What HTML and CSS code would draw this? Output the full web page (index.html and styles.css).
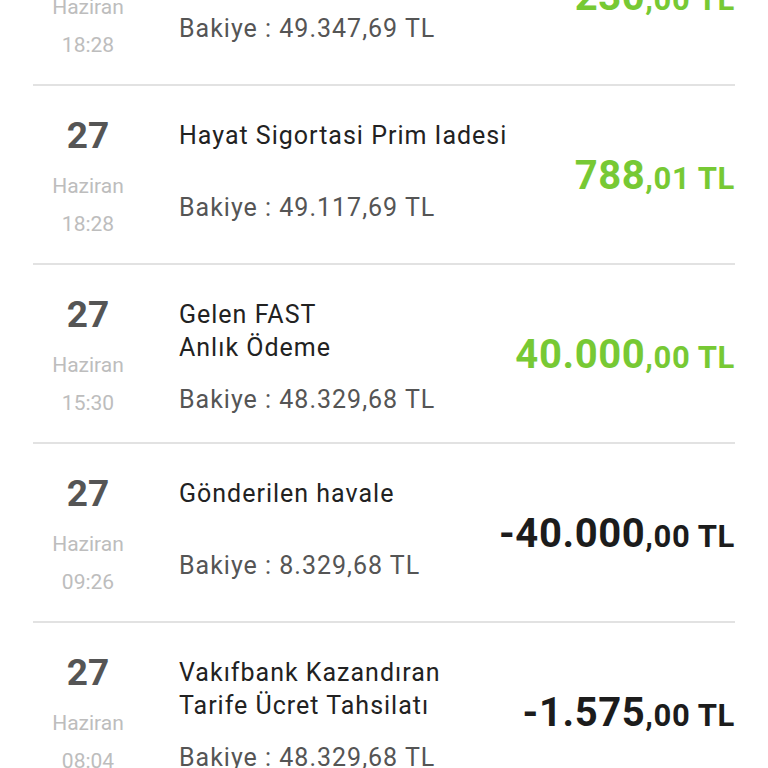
FILE: index.html
```html
<!DOCTYPE html>
<html lang="tr">
<head>
  <meta charset="UTF-8" />
  <meta name="viewport" content="width=device-width, initial-scale=1.0" />
  <title>Hesap Hareketleri</title>
  <link rel="stylesheet" href="styles.css">
</head>
<body>
  <!-- list is scrolled, first row partly hidden -->
  <div class="tx-list">

    <div class="tx">
      <div class="tx-date"><span class="day">27</span><span class="month">Haziran</span><span class="time">18:28</span></div>
      <div class="tx-info"><div class="title">Gelen havale</div><div class="balance">Bakiye : 49.347,69 TL</div></div>
      <div class="tx-amount plus"><span class="int">230</span><span class="dec">,00 TL</span></div>
    </div>

    <div class="tx">
      <div class="tx-date"><span class="day">27</span><span class="month">Haziran</span><span class="time">18:28</span></div>
      <div class="tx-info"><div class="title">Hayat Sigortasi Prim Iadesi</div><div class="balance">Bakiye : 49.117,69 TL</div></div>
      <div class="tx-amount plus"><span class="int">788</span><span class="dec">,01 TL</span></div>
    </div>

    <div class="tx">
      <div class="tx-date"><span class="day">27</span><span class="month">Haziran</span><span class="time">15:30</span></div>
      <div class="tx-info"><div class="title">Gelen FAST<br>Anlık Ödeme</div><div class="balance">Bakiye : 48.329,68 TL</div></div>
      <div class="tx-amount plus"><span class="int">40.000</span><span class="dec">,00 TL</span></div>
    </div>

    <div class="tx">
      <div class="tx-date"><span class="day">27</span><span class="month">Haziran</span><span class="time">09:26</span></div>
      <div class="tx-info"><div class="title">Gönderilen havale</div><div class="balance">Bakiye : 8.329,68 TL</div></div>
      <div class="tx-amount"><span class="int">-40.000</span><span class="dec">,00 TL</span></div>
    </div>

    <div class="tx">
      <div class="tx-date"><span class="day">27</span><span class="month">Haziran</span><span class="time">08:04</span></div>
      <div class="tx-info"><div class="title">Vakıfbank Kazandıran<br>Tarife Ücret Tahsilatı</div><div class="balance">Bakiye : 48.329,68 TL</div></div>
      <div class="tx-amount"><span class="int">-1.575</span><span class="dec">,00 TL</span></div>
    </div>

  </div>
</body>
</html>
```

FILE: styles.css
```css
body { margin: 0; background: #fff; font-family: Roboto, "Noto Sans", sans-serif; overflow: hidden; }
.tx-list { margin-top: -93px; padding: 0 33px; }
.tx { display: flex; height: 177px; border-bottom: 2px solid #e2e2e2; }
.tx-date { width: 110px; flex-shrink: 0; display: flex; flex-direction: column; align-items: center; padding-top: 28px; }
.tx-date .day { font-size: 37px; font-weight: 700; color: #555; line-height: 44px; margin-bottom: 9px; }
.tx-date .month, .tx-date .time { font-size: 21px; color: #bdbdbd; line-height: 38px; }
.tx-info { flex: 1; padding: 33px 0 0 36px; }
.tx-info .title { font-size: 25px; letter-spacing: 1px; line-height: 33px; color: #222; min-height: 53px; margin-bottom: 19px; }
.tx-info .balance { font-size: 25px; letter-spacing: 1px; line-height: 33px; color: #555; }
.tx-amount { align-self: center; padding-top: 2px; font-weight: 700; color: #1c1c1c; white-space: nowrap; letter-spacing: 0.6px; }
.tx-amount.plus { color: #77c934; }
.tx-amount .int { font-size: 40px; }
.tx-amount .dec { font-size: 31px; }
```
